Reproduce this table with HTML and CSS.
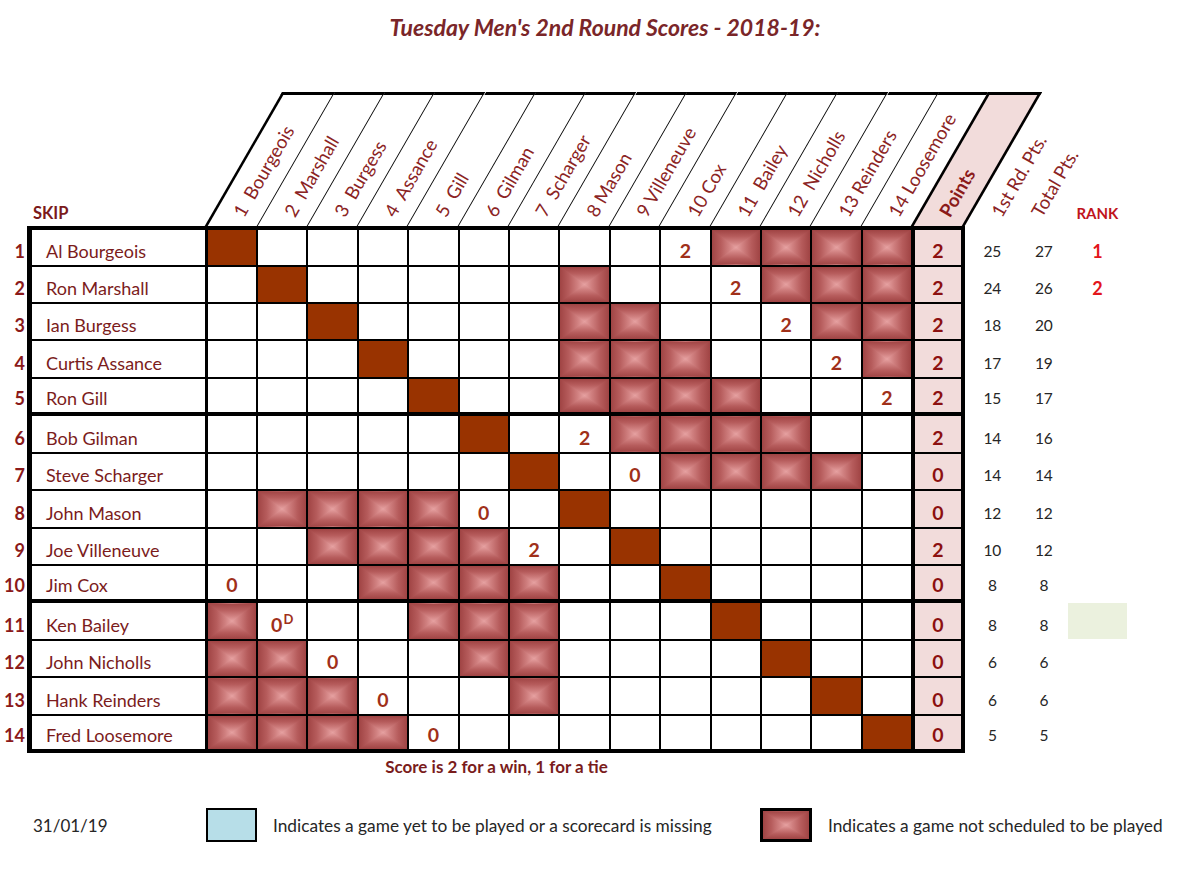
FILE: index.html
```html
<!DOCTYPE html>
<html lang="en">
<head>
<meta charset="utf-8">
<title>Tuesday Men's 2nd Round Scores - 2018-19</title>
<link rel="stylesheet" href="styles.css">
</head>
<body>
<div class="page">
  <h1 class="title">Tuesday Men's 2nd Round Scores - 2018-19:</h1>

  <div class="hdr">
    <div class="skip">SKIP</div>
    <div class="hc first"><span class="lb">1&nbsp; Bourgeois</span></div>
    <div class="hc"><span class="lb">2&nbsp; Marshall</span></div>
    <div class="hc"><span class="lb">3&nbsp; Burgess</span></div>
    <div class="hc"><span class="lb">4&nbsp; Assance</span></div>
    <div class="hc"><span class="lb">5&nbsp; Gill</span></div>
    <div class="hc"><span class="lb">6&nbsp; Gilman</span></div>
    <div class="hc"><span class="lb">7&nbsp; Scharger</span></div>
    <div class="hc"><span class="lb">8 Mason</span></div>
    <div class="hc"><span class="lb">9 Villeneuve</span></div>
    <div class="hc"><span class="lb">10 Cox</span></div>
    <div class="hc"><span class="lb">11&nbsp; Bailey</span></div>
    <div class="hc"><span class="lb">12&nbsp; Nicholls</span></div>
    <div class="hc"><span class="lb">13 Reinders</span></div>
    <div class="hc last"><span class="lb">14 Loosemore</span></div>
    <div class="hc pts"><span class="lb">Points</span></div>
    <div class="hc plain w1"><span class="lb">1st Rd. Pts.</span></div>
    <div class="hc plain w2"><span class="lb">Total Pts.</span></div>
    <div class="rankh">RANK</div>
  </div>

  <div class="grid">
    <div class="row first">
      <div class="n">1</div><div class="nm">Al Bourgeois</div>
      <div class="g d"></div><div class="g"></div><div class="g"></div><div class="g"></div><div class="g"></div><div class="g"></div><div class="g"></div>
      <div class="g"></div><div class="g"></div><div class="g">2</div><div class="g x"></div><div class="g x"></div><div class="g x"></div><div class="g x"></div>
      <div class="p">2</div><div class="t1">25</div><div class="t2">27</div><div class="rk">1</div>
    </div>
    <div class="row">
      <div class="n">2</div><div class="nm">Ron Marshall</div>
      <div class="g"></div><div class="g d"></div><div class="g"></div><div class="g"></div><div class="g"></div><div class="g"></div><div class="g"></div>
      <div class="g x"></div><div class="g"></div><div class="g"></div><div class="g">2</div><div class="g x"></div><div class="g x"></div><div class="g x"></div>
      <div class="p">2</div><div class="t1">24</div><div class="t2">26</div><div class="rk">2</div>
    </div>
    <div class="row">
      <div class="n">3</div><div class="nm">Ian Burgess</div>
      <div class="g"></div><div class="g"></div><div class="g d"></div><div class="g"></div><div class="g"></div><div class="g"></div><div class="g"></div>
      <div class="g x"></div><div class="g x"></div><div class="g"></div><div class="g"></div><div class="g">2</div><div class="g x"></div><div class="g x"></div>
      <div class="p">2</div><div class="t1">18</div><div class="t2">20</div><div class="rk"></div>
    </div>
    <div class="row">
      <div class="n">4</div><div class="nm">Curtis Assance</div>
      <div class="g"></div><div class="g"></div><div class="g"></div><div class="g d"></div><div class="g"></div><div class="g"></div><div class="g"></div>
      <div class="g x"></div><div class="g x"></div><div class="g x"></div><div class="g"></div><div class="g"></div><div class="g">2</div><div class="g x"></div>
      <div class="p">2</div><div class="t1">17</div><div class="t2">19</div><div class="rk"></div>
    </div>
    <div class="row thick">
      <div class="n">5</div><div class="nm">Ron Gill</div>
      <div class="g"></div><div class="g"></div><div class="g"></div><div class="g"></div><div class="g d"></div><div class="g"></div><div class="g"></div>
      <div class="g x"></div><div class="g x"></div><div class="g x"></div><div class="g x"></div><div class="g"></div><div class="g"></div><div class="g">2</div>
      <div class="p">2</div><div class="t1">15</div><div class="t2">17</div><div class="rk"></div>
    </div>
    <div class="row">
      <div class="n">6</div><div class="nm">Bob Gilman</div>
      <div class="g"></div><div class="g"></div><div class="g"></div><div class="g"></div><div class="g"></div><div class="g d"></div><div class="g"></div>
      <div class="g">2</div><div class="g x"></div><div class="g x"></div><div class="g x"></div><div class="g x"></div><div class="g"></div><div class="g"></div>
      <div class="p">2</div><div class="t1">14</div><div class="t2">16</div><div class="rk"></div>
    </div>
    <div class="row">
      <div class="n">7</div><div class="nm">Steve Scharger</div>
      <div class="g"></div><div class="g"></div><div class="g"></div><div class="g"></div><div class="g"></div><div class="g"></div><div class="g d"></div>
      <div class="g"></div><div class="g">0</div><div class="g x"></div><div class="g x"></div><div class="g x"></div><div class="g x"></div><div class="g"></div>
      <div class="p">0</div><div class="t1">14</div><div class="t2">14</div><div class="rk"></div>
    </div>
    <div class="row">
      <div class="n">8</div><div class="nm">John Mason</div>
      <div class="g"></div><div class="g x"></div><div class="g x"></div><div class="g x"></div><div class="g x"></div><div class="g">0</div><div class="g"></div>
      <div class="g d"></div><div class="g"></div><div class="g"></div><div class="g"></div><div class="g"></div><div class="g"></div><div class="g"></div>
      <div class="p">0</div><div class="t1">12</div><div class="t2">12</div><div class="rk"></div>
    </div>
    <div class="row">
      <div class="n">9</div><div class="nm">Joe Villeneuve</div>
      <div class="g"></div><div class="g"></div><div class="g x"></div><div class="g x"></div><div class="g x"></div><div class="g x"></div><div class="g">2</div>
      <div class="g"></div><div class="g d"></div><div class="g"></div><div class="g"></div><div class="g"></div><div class="g"></div><div class="g"></div>
      <div class="p">2</div><div class="t1">10</div><div class="t2">12</div><div class="rk"></div>
    </div>
    <div class="row thick">
      <div class="n">10</div><div class="nm">Jim Cox</div>
      <div class="g">0</div><div class="g"></div><div class="g"></div><div class="g x"></div><div class="g x"></div><div class="g x"></div><div class="g x"></div>
      <div class="g"></div><div class="g"></div><div class="g d"></div><div class="g"></div><div class="g"></div><div class="g"></div><div class="g"></div>
      <div class="p">0</div><div class="t1">8</div><div class="t2">8</div><div class="rk"></div>
    </div>
    <div class="row">
      <div class="n">11</div><div class="nm">Ken Bailey</div>
      <div class="g x"></div><div class="g"><span>0<sup>D</sup></span></div><div class="g"></div><div class="g"></div><div class="g x"></div><div class="g x"></div><div class="g x"></div>
      <div class="g"></div><div class="g"></div><div class="g"></div><div class="g d"></div><div class="g"></div><div class="g"></div><div class="g"></div>
      <div class="p">0</div><div class="t1">8</div><div class="t2">8</div><div class="rk green"></div>
    </div>
    <div class="row">
      <div class="n">12</div><div class="nm">John Nicholls</div>
      <div class="g x"></div><div class="g x"></div><div class="g">0</div><div class="g"></div><div class="g"></div><div class="g x"></div><div class="g x"></div>
      <div class="g"></div><div class="g"></div><div class="g"></div><div class="g"></div><div class="g d"></div><div class="g"></div><div class="g"></div>
      <div class="p">0</div><div class="t1">6</div><div class="t2">6</div><div class="rk"></div>
    </div>
    <div class="row">
      <div class="n">13</div><div class="nm">Hank Reinders</div>
      <div class="g x"></div><div class="g x"></div><div class="g x"></div><div class="g">0</div><div class="g"></div><div class="g"></div><div class="g x"></div>
      <div class="g"></div><div class="g"></div><div class="g"></div><div class="g"></div><div class="g"></div><div class="g d"></div><div class="g"></div>
      <div class="p">0</div><div class="t1">6</div><div class="t2">6</div><div class="rk"></div>
    </div>
    <div class="row thick">
      <div class="n">14</div><div class="nm">Fred Loosemore</div>
      <div class="g x"></div><div class="g x"></div><div class="g x"></div><div class="g x"></div><div class="g">0</div><div class="g"></div><div class="g"></div>
      <div class="g"></div><div class="g"></div><div class="g"></div><div class="g"></div><div class="g"></div><div class="g"></div><div class="g d"></div>
      <div class="p">0</div><div class="t1">5</div><div class="t2">5</div><div class="rk"></div>
    </div>
  </div>

  <p class="note">Score is 2 for a win, 1 for a tie</p>

  <div class="legend">
    <div class="date">31/01/19</div>
    <div class="box blue"></div>
    <div class="lt first-lt">Indicates a game yet to be played or a scorecard is missing</div>
    <div class="box x xbox"></div>
    <div class="lt">Indicates a game not scheduled to be played</div>
  </div>
</div>
</body>
</html>
```

FILE: styles.css
```css
body {
  margin: 0;
  background: #ffffff;
  font-family: Lato, "Open Sans", "Liberation Sans", sans-serif;
}

.page {
  width: 1200px;
  padding-top: 12px;
}

.title {
  margin: 0 0 0 10px;
  text-align: center;
  font-style: italic;
  font-weight: 700;
  font-size: 23px;
  line-height: 30px;
  color: #7a2629;
}

/* ---------- slanted header ---------- */
.hdr {
  display: flex;
  height: 133.5px;
  margin-top: 50px;
}

.skip {
  width: 205px;
  flex: none;
  box-sizing: border-box;
  padding: 0 0 5px 33px;
  display: flex;
  align-items: flex-end;
  font-weight: 700;
  font-size: 16.5px;
  line-height: 16px;
  color: #7b1a1a;
}

.hc {
  width: 50.4px;
  flex: none;
  box-sizing: border-box;
  border-top: 3px solid #000;
  border-right: 1px solid #000;
  transform: skewX(-30deg);
  transform-origin: 0 100%;
  display: flex;
  justify-content: center;
  align-items: flex-end;
  padding-bottom: 2px;
}

.hc.first {
  width: 52.5px;
  border-left: 3px solid #000;
}

.hc.last {
  width: 49.2px;
  border-right: none;
}

.hc.pts {
  width: 53.5px;
  border-left: 3.5px solid #000;
  border-right: 3.5px solid #000;
  background: #f2dcdb;
}

.hc.plain {
  border: none;
}

.w1 { width: 50px; }
.w2 { width: 30px; }

.lb {
  width: 0;
  min-width: 0;
  flex: none;
  white-space: nowrap;
  font-size: 18.5px;
  line-height: 18px;
  color: #8b2424;
  transform-origin: 0 50%;
  transform: skewX(30deg) rotate(-60deg);
}

.pts .lb {
  font-weight: 700;
  color: #8b1a1a;
}

.rankh {
  width: 82px;
  flex: none;
  display: flex;
  justify-content: center;
  align-items: flex-end;
  padding: 0 0 5px 23px;
  box-sizing: border-box;
  font-weight: 700;
  font-size: 15px;
  line-height: 16px;
  color: #c0141c;
}

/* ---------- score grid ---------- */
.grid {
  display: grid;
  grid-template-columns: 27px 181px 50px repeat(12, 50.4px) 52.2px 50px 55px 48px 59px;
  grid-template-rows: 41px repeat(13, 37.45px);
}

.row {
  display: contents;
}

.row > div {
  box-sizing: border-box;
  border-bottom: 2px solid transparent;
  display: flex;
  align-items: flex-end;
  justify-content: center;
  padding-bottom: 4px;
  line-height: 20px;
}

.row > .nm,
.row > .g,
.row > .p {
  border-bottom-color: #000;
}

.row.first > .nm,
.row.first > .g,
.row.first > .p {
  border-top: 4px solid #000;
}

.row.thick > div {
  border-bottom-width: 4px;
}

.row > .n {
  justify-content: flex-end;
  padding-right: 2px;
  font-weight: 700;
  font-size: 18px;
  color: #8b1a1a;
}

.row > .nm {
  justify-content: flex-start;
  padding-left: 14px;
  border-left: 5px solid #000;
  border-right: 3px solid #000;
  font-size: 18px;
  color: #7b1c1c;
  white-space: nowrap;
}

.g {
  border-right: 2px solid #000;
  font-weight: 700;
  font-size: 19.5px;
  color: #a0301a;
}

.row > .g:nth-child(16) {
  border-right-width: 4px;
}

.g sup {
  font-size: 13px;
  line-height: 0;
  vertical-align: 8px;
  margin-left: 1px;
}

.d {
  background: #993300;
}

.x {
  position: relative;
  background: linear-gradient(90deg, #a04444 0%, #b65c5c 18%, #d08080 36%, #e6a1a1 50%, #d08080 64%, #b65c5c 82%, #a04444 100%);
}

.x::before {
  content: "";
  position: absolute;
  inset: 0;
  background: linear-gradient(180deg, #a04444 0%, #b65c5c 18%, #d08080 36%, #e6a1a1 50%, #d08080 64%, #b65c5c 82%, #a04444 100%);
  clip-path: polygon(0 0, 100% 0, 50% 50%, 100% 100%, 0 100%, 50% 50%);
}

.p {
  border-right: 4px solid #000;
  background: #f2dcdb;
  font-weight: 700;
  font-size: 19.5px;
  color: #8c1010;
}

.t1,
.t2 {
  font-size: 15.5px;
  color: #262626;
}

.rk {
  font-weight: 700;
  font-size: 18px;
  color: #e3161c;
}

.rk.green {
  background: #ebf1de;
  background-clip: padding-box;
}

/* ---------- footer ---------- */
.note {
  margin: 4px 0 0 28px;
  width: 937px;
  text-align: center;
  font-weight: 700;
  font-size: 17px;
  line-height: 20px;
  color: #7a1c1c;
}

.legend {
  display: flex;
  align-items: center;
  margin-top: 31px;
  height: 34px;
}

.date {
  width: 206px;
  flex: none;
  box-sizing: border-box;
  padding-left: 33px;
  font-size: 17px;
  color: #262626;
}

.box {
  width: 51px;
  height: 34px;
  flex: none;
  box-sizing: border-box;
  border: 2px solid #000;
}

.blue {
  background: #b7dee8;
}

.xbox {
  width: 52px;
  border-width: 3px;
}

.lt {
  margin-left: 16px;
  font-size: 17.3px;
  color: #262626;
  white-space: nowrap;
}

.first-lt {
  width: 487px;
  flex: none;
}
```
